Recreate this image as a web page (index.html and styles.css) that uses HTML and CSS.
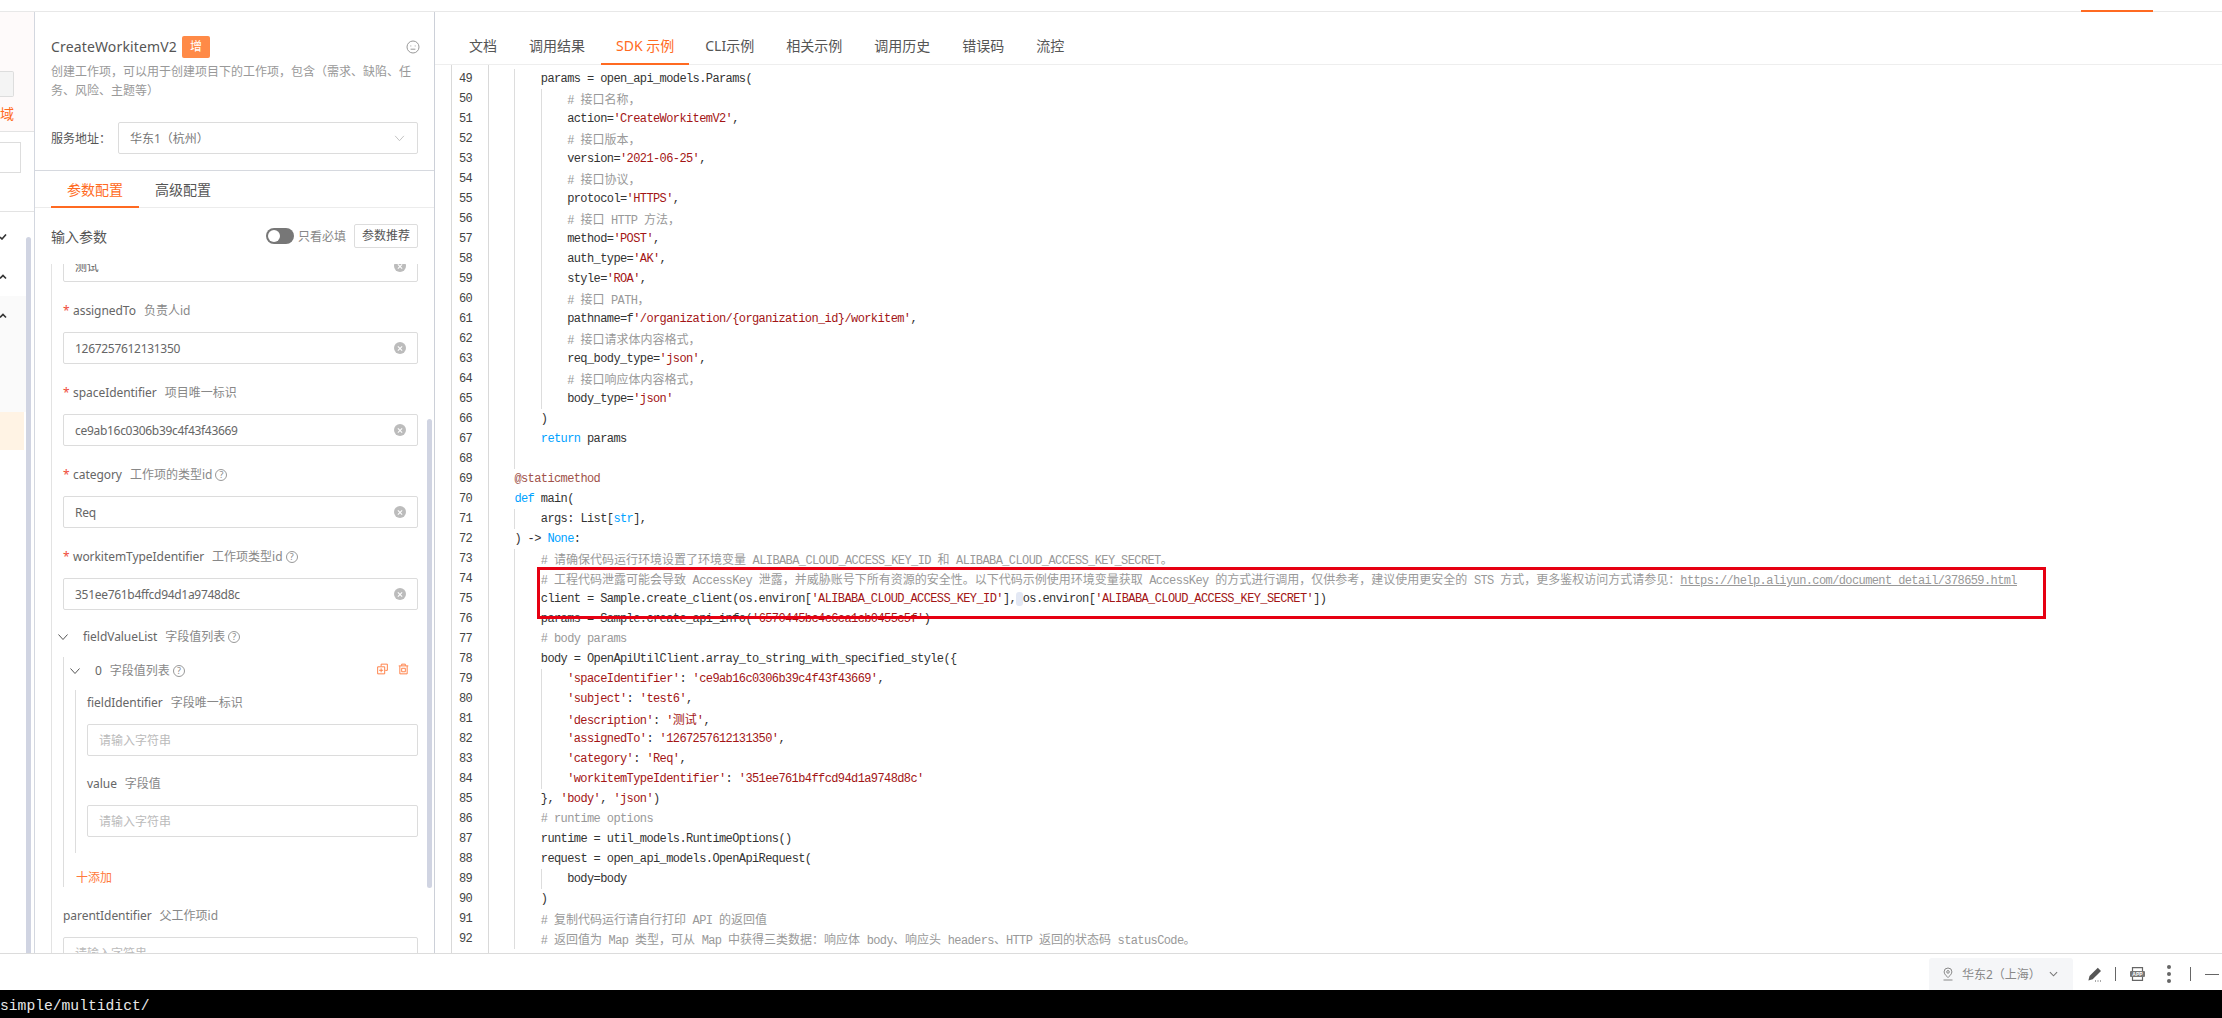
FILE: index.html
```html
<!DOCTYPE html>
<html lang="zh-CN">
<head>
<meta charset="utf-8">
<title>CreateWorkitemV2</title>
<link rel="stylesheet" href="styles.css">
</head>
<body>
<div class="page">
  <div class="topbar"><span class="top-mark"></span></div>
  <div class="main">
    <aside class="rail">
      <div class="rail-head"><div class="rail-btn"></div><div class="rail-link">域</div></div>
      <div class="rail-search"><div class="rail-input"></div></div>
      <div class="rail-row rail-first"><svg class="rail-chev" viewBox="0 0 8 6"><path d="M1 3 3 5 7 .5"/></svg></div>
      <div class="rail-row"><svg class="rail-chev" viewBox="0 0 8 6"><path d="M1 4.5 4 1.500 7 4.500"/></svg></div>
      <div class="rail-row rail-soft"><svg class="rail-chev" viewBox="0 0 8 6"><path d="M1 4.500 4 1.500 7 4.500"/></svg></div>
      <div class="rail-sel"></div>
      <span class="rail-bar"></span>
    </aside>

    <section class="panel">
      <header class="panel-head">
        <div class="title-row">
          <h1 class="title">CreateWorkitemV2</h1><span class="badge">增</span>
          <svg class="smile" viewBox="0 0 14 14"><circle cx="7" cy="7" r="6"/><path d="M4.800 5.500v.9M9.200 5.500v.9M4.600 9.200h4.800"/></svg>
        </div>
        <p class="desc">创建工作项&#xFF0C;可以用于创建项目下的工作项&#xFF0C;包含&#xFF08;需求、缺陷、任务、风险、主题等&#xFF09;</p>
        <div class="addr">
          <span class="addr-label">服务地址&#xFF1A;</span>
          <div class="select"><span>华东1&#xFF08;杭州&#xFF09;</span><svg class="sel-chev" viewBox="0 0 12 8"><path d="M1 1l5 5.500L11 1"/></svg></div>
        </div>
      </header>
      <nav class="ptabs"><span class="ptab on">参数配置</span><span class="ptab">高级配置</span></nav>
      <div class="inhead">
        <span class="in-title">输入参数</span>
        <span class="toggle"><span class="knob"></span></span>
        <span class="must">只看必填</span>
        <span class="rec">参数推荐</span>
      </div>
      <div class="form">
        <div class="input first"><span>测试</span><span class="clear"></span></div>
        <div class="lab"><b>*</b><span class="nm">assignedTo</span><span class="sub">负责人id</span></div>
        <div class="input"><span>1267257612131350</span><span class="clear"></span></div>
        <div class="lab"><b>*</b><span class="nm">spaceIdentifier</span><span class="sub">项目唯一标识</span></div>
        <div class="input"><span>ce9ab16c0306b39c4f43f43669</span><span class="clear"></span></div>
        <div class="lab"><b>*</b><span class="nm">category</span><span class="sub">工作项的类型id</span><span class="help">?</span></div>
        <div class="input"><span>Req</span><span class="clear"></span></div>
        <div class="lab"><b>*</b><span class="nm">workitemTypeIdentifier</span><span class="sub">工作项类型id</span><span class="help">?</span></div>
        <div class="input"><span>351ee761b4ffcd94d1a9748d8c</span><span class="clear"></span></div>

        <div class="lab tree-lab"><svg class="tree-chev" viewBox="0 0 10 6"><path d="M.5.5 5 5.500 9.500.5"/></svg><span class="nm">fieldValueList</span><span class="sub">字段值列表</span><span class="help">?</span></div>
        <div class="group">
          <div class="lab zero-lab">
            <svg class="tree-chev" viewBox="0 0 10 6"><path d="M.5.5 5 5.500 9.500.5"/></svg><span class="nm">0</span><span class="sub">字段值列表</span><span class="help">?</span>
            <span class="acts">
              <svg class="act" viewBox="0 0 12 12"><path d="M4.500 3V.7h6.800v6.800H9M.7 3.600h7.700v7.700H.7zM2.300 7.400h4.400M4.500 5.300v4.300"/></svg>
              <svg class="act" viewBox="0 0 12 12"><path d="M.8 2.600h10.400M4 2.400V.7h4v1.700M2 2.800v8.500h8V2.800M4 5.200h4v3.800H4z"/></svg>
            </span>
          </div>
          <div class="inner">
            <div class="lab inner-first"><span class="nm">fieldIdentifier</span><span class="sub">字段唯一标识</span></div>
            <div class="input ph"><span>请输入字符串</span></div>
            <div class="lab inner-next"><span class="nm">value</span><span class="sub">字段值</span></div>
            <div class="input ph"><span>请输入字符串</span></div>
          </div>
          <div class="add">十添加</div>
        </div>
        <div class="lab"><span class="nm">parentIdentifier</span><span class="sub">父工作项id</span></div>
        <div class="input ph"><span>请输入字符串</span></div>
      </div>
      <span class="form-bar"></span>
    </section>

    <section class="right">
      <nav class="rtabs">
        <span class="rtab">文档</span><span class="rtab">调用结果</span><span class="rtab on">SDK 示例</span><span class="rtab">CLI示例</span><span class="rtab">相关示例</span><span class="rtab">调用历史</span><span class="rtab">错误码</span><span class="rtab">流控</span>
      </nav>
      <div class="code">
<div class="ln"><span class="no">49</span><code class="src"><i class="b"></i><i class="g"></i>params = open_api_models.Params(</code></div>
<div class="ln"><span class="no">50</span><code class="src c"><i class="b"></i><i class="g"></i><i class="g"></i># <span class="z">接口名称&#xFF0C;</span></code></div>
<div class="ln"><span class="no">51</span><code class="src"><i class="b"></i><i class="g"></i><i class="g"></i>action=<span class="s">'CreateWorkitemV2'</span>,</code></div>
<div class="ln"><span class="no">52</span><code class="src c"><i class="b"></i><i class="g"></i><i class="g"></i># <span class="z">接口版本&#xFF0C;</span></code></div>
<div class="ln"><span class="no">53</span><code class="src"><i class="b"></i><i class="g"></i><i class="g"></i>version=<span class="s">'2021-06-25'</span>,</code></div>
<div class="ln"><span class="no">54</span><code class="src c"><i class="b"></i><i class="g"></i><i class="g"></i># <span class="z">接口协议&#xFF0C;</span></code></div>
<div class="ln"><span class="no">55</span><code class="src"><i class="b"></i><i class="g"></i><i class="g"></i>protocol=<span class="s">'HTTPS'</span>,</code></div>
<div class="ln"><span class="no">56</span><code class="src c"><i class="b"></i><i class="g"></i><i class="g"></i># <span class="z">接口</span> HTTP <span class="z">方法&#xFF0C;</span></code></div>
<div class="ln"><span class="no">57</span><code class="src"><i class="b"></i><i class="g"></i><i class="g"></i>method=<span class="s">'POST'</span>,</code></div>
<div class="ln"><span class="no">58</span><code class="src"><i class="b"></i><i class="g"></i><i class="g"></i>auth_type=<span class="s">'AK'</span>,</code></div>
<div class="ln"><span class="no">59</span><code class="src"><i class="b"></i><i class="g"></i><i class="g"></i>style=<span class="s">'ROA'</span>,</code></div>
<div class="ln"><span class="no">60</span><code class="src c"><i class="b"></i><i class="g"></i><i class="g"></i># <span class="z">接口</span> PATH<span class="z">&#xFF0C;</span></code></div>
<div class="ln"><span class="no">61</span><code class="src"><i class="b"></i><i class="g"></i><i class="g"></i>pathname=f<span class="s">'/organization/{organization_id}/workitem'</span>,</code></div>
<div class="ln"><span class="no">62</span><code class="src c"><i class="b"></i><i class="g"></i><i class="g"></i># <span class="z">接口请求体内容格式&#xFF0C;</span></code></div>
<div class="ln"><span class="no">63</span><code class="src"><i class="b"></i><i class="g"></i><i class="g"></i>req_body_type=<span class="s">'json'</span>,</code></div>
<div class="ln"><span class="no">64</span><code class="src c"><i class="b"></i><i class="g"></i><i class="g"></i># <span class="z">接口响应体内容格式&#xFF0C;</span></code></div>
<div class="ln"><span class="no">65</span><code class="src"><i class="b"></i><i class="g"></i><i class="g"></i>body_type=<span class="s">'json'</span></code></div>
<div class="ln"><span class="no">66</span><code class="src"><i class="b"></i><i class="g"></i>)</code></div>
<div class="ln"><span class="no">67</span><code class="src"><i class="b"></i><i class="g"></i><span class="k">return</span> params</code></div>
<div class="ln"><span class="no">68</span><code class="src"><i class="b"></i><i class="g"></i></code></div>
<div class="ln"><span class="no">69</span><code class="src"><i class="b"></i><span class="m">@staticmethod</span></code></div>
<div class="ln"><span class="no">70</span><code class="src"><i class="b"></i><span class="k">def</span> main(</code></div>
<div class="ln"><span class="no">71</span><code class="src"><i class="b"></i><i class="g"></i>args: List[<span class="k">str</span>],</code></div>
<div class="ln"><span class="no">72</span><code class="src"><i class="b"></i>) -&gt; <span class="k">None</span>:</code></div>
<div class="ln"><span class="no">73</span><code class="src c"><i class="b"></i><i class="g"></i># <span class="z">请确保代码运行环境设置了环境变量</span> ALIBABA_CLOUD_ACCESS_KEY_ID <span class="z">和</span> ALIBABA_CLOUD_ACCESS_KEY_SECRET<span class="z">。</span></code></div>
<div class="ln"><span class="no">74</span><code class="src c"><i class="b"></i><i class="g"></i># <span class="z">工程代码泄露可能会导致</span> AccessKey <span class="z">泄露&#xFF0C;并威胁账号下所有资源的安全性。以下代码示例使用环境变量获取</span> AccessKey <span class="z">的方式进行调用&#xFF0C;仅供参考&#xFF0C;建议使用更安全的</span> STS <span class="z">方式&#xFF0C;更多鉴权访问方式请参见&#xFF1A;</span><u>https://help.aliyun.com/document_detail/378659.html</u></code></div>
<div class="ln"><span class="no">75</span><code class="src"><i class="b"></i><i class="g"></i>client = Sample.create_client(os.environ[<span class="s">'ALIBABA_CLOUD_ACCESS_KEY_ID'</span>],<span class="cursor"> </span>os.environ[<span class="s">'ALIBABA_CLOUD_ACCESS_KEY_SECRET'</span>])</code></div>
<div class="ln"><span class="no">76</span><code class="src"><i class="b"></i><i class="g"></i>params = Sample.create_api_info(<span class="s">'6570445bc4c6ca1cb0455c5f'</span>)</code></div>
<div class="ln"><span class="no">77</span><code class="src c"><i class="b"></i><i class="g"></i># body params</code></div>
<div class="ln"><span class="no">78</span><code class="src"><i class="b"></i><i class="g"></i>body = OpenApiUtilClient.array_to_string_with_specified_style({</code></div>
<div class="ln"><span class="no">79</span><code class="src"><i class="b"></i><i class="g"></i><i class="g"></i><span class="s">'spaceIdentifier'</span>: <span class="s">'ce9ab16c0306b39c4f43f43669'</span>,</code></div>
<div class="ln"><span class="no">80</span><code class="src"><i class="b"></i><i class="g"></i><i class="g"></i><span class="s">'subject'</span>: <span class="s">'test6'</span>,</code></div>
<div class="ln"><span class="no">81</span><code class="src"><i class="b"></i><i class="g"></i><i class="g"></i><span class="s">'description'</span>: <span class="s">'<span class="z">测试</span>'</span>,</code></div>
<div class="ln"><span class="no">82</span><code class="src"><i class="b"></i><i class="g"></i><i class="g"></i><span class="s">'assignedTo'</span>: <span class="s">'1267257612131350'</span>,</code></div>
<div class="ln"><span class="no">83</span><code class="src"><i class="b"></i><i class="g"></i><i class="g"></i><span class="s">'category'</span>: <span class="s">'Req'</span>,</code></div>
<div class="ln"><span class="no">84</span><code class="src"><i class="b"></i><i class="g"></i><i class="g"></i><span class="s">'workitemTypeIdentifier'</span>: <span class="s">'351ee761b4ffcd94d1a9748d8c'</span></code></div>
<div class="ln"><span class="no">85</span><code class="src"><i class="b"></i><i class="g"></i>}, <span class="s">'body'</span>, <span class="s">'json'</span>)</code></div>
<div class="ln"><span class="no">86</span><code class="src c"><i class="b"></i><i class="g"></i># runtime options</code></div>
<div class="ln"><span class="no">87</span><code class="src"><i class="b"></i><i class="g"></i>runtime = util_models.RuntimeOptions()</code></div>
<div class="ln"><span class="no">88</span><code class="src"><i class="b"></i><i class="g"></i>request = open_api_models.OpenApiRequest(</code></div>
<div class="ln"><span class="no">89</span><code class="src"><i class="b"></i><i class="g"></i><i class="g"></i>body=body</code></div>
<div class="ln"><span class="no">90</span><code class="src"><i class="b"></i><i class="g"></i>)</code></div>
<div class="ln"><span class="no">91</span><code class="src c"><i class="b"></i><i class="g"></i># <span class="z">复制代码运行请自行打印</span> API <span class="z">的返回值</span></code></div>
<div class="ln"><span class="no">92</span><code class="src c"><i class="b"></i><i class="g"></i># <span class="z">返回值为</span> Map <span class="z">类型&#xFF0C;可从</span> Map <span class="z">中获得三类数据&#xFF1A;响应体</span> body<span class="z">、响应头</span> headers<span class="z">、</span>HTTP <span class="z">返回的状态码</span> statusCode<span class="z">。</span></code></div>
        <span class="redbox"></span>
      </div>
    </section>
  </div>

  <footer class="statusbar">
    <div class="region">
      <svg class="pin" viewBox="0 0 12 14"><path d="M6 1a3.900 3.900 0 0 0-3.900 3.900C2.100 7.500 6 10.500 6 10.500s3.900-3 3.900-5.600A3.900 3.900 0 0 0 6 1z"/><circle cx="6" cy="4.900" r="1.300"/><path d="M1.500 13h9"/></svg>
      <span class="region-name">华东2&#xFF08;上海&#xFF09;</span>
      <svg class="region-chev" viewBox="0 0 10 6"><path d="M1 1l4 4 4-4"/></svg>
    </div>
    <svg class="pen" viewBox="0 0 15 15"><path d="M10.800.8l3.200 3.200-8.300 8.300-4.300 1.100 1.100-4.300z"/><path class="pen-dots" d="M8 14h1M10.500 14h1M13 14h1"/></svg>
    <span class="sep"></span>
    <svg class="appicon" viewBox="0 0 15 14"><path class="app-frame" d="M2.500 4V.6h10V4M2.500 10v3.400h10V10"/><rect class="app-band" x="0" y="4" width="15" height="6" rx="1"/><text class="app-text" x="7.500" y="9">APP</text></svg>
    <span class="dots"><i></i><i></i><i></i></span>
    <span class="sep sep2"></span>
    <span class="dash"></span>
  </footer>
  <div class="terminal">simple/multidict/</div>
</div>
</body>
</html>
```
FILE: styles.css
```css
* { box-sizing: border-box; }
html, body { margin: 0; padding: 0; background: #fff; }
body { font-family: "Noto Sans", "Noto Sans CJK SC", sans-serif; color: #555; font-size: 12px; }
.page { width: 2222px; height: 1018px; overflow: hidden; display: flex; flex-direction: column; }

.topbar { height: 12px; flex: none; border-bottom: 1px solid #e8e8e8; position: relative; }
.top-mark { position: absolute; left: 2081px; top: 10px; width: 72px; height: 2px; background: #ff6a21; }

.main { height: 941px; flex: none; display: flex; overflow: hidden; }

/* left rail */
.rail { width: 35px; flex: none; border-right: 1px solid #d3d7df; position: relative; overflow: hidden; }
.rail-head { height: 120px; background: #fefafa; border-bottom: 1px solid #e3e3e3; padding-top: 59px; }
.rail-btn { width: 14px; height: 26px; background: #f4f4f4; border: 1px solid #ddd; border-left: 0; border-radius: 0 2px 2px 0; }
.rail-link { margin-top: 8px; font-size: 14px; line-height: 18px; color: #ff6a21; }
.rail-search { height: 80px; padding-top: 10px; border-bottom: 1px solid #e3e3e3; }
.rail-input { width: 21px; height: 31px; border: 1px solid #ddd; border-left: 0; }
.rail-row { height: 39px; padding-top: 17px; display: flex; align-items: flex-start; }
.rail-first { padding-top: 22px; height: 45px; }
.rail-soft { background: #fafafa; width: 26px; height: 116px; padding-top: 17px; }
.rail-chev { width: 8px; height: 6px; margin-left: -1px; fill: none; stroke: #333; stroke-width: 1.600; }
.rail-sel { width: 24px; height: 38px; background: #fff3e4; }
.rail-bar { position: absolute; left: 26px; top: 225px; width: 5px; height: 730px; border-radius: 3px; background: #d0d4e2; }

/* parameters panel */
.panel { width: 400px; flex: none; border-right: 1px solid #ccd0d8; position: relative; display: flex; flex-direction: column; overflow: hidden; }
.panel-head { height: 159px; flex: none; padding: 24px 16px 0; border-bottom: 1px solid #d6d9df; }
.title-row { display: flex; align-items: center; height: 22px; }
.title { margin: 0; font-size: 14px; font-weight: 400; color: #555; line-height: 22px; letter-spacing: .15px; }
.badge { width: 28px; height: 22px; margin-left: 5px; background: #ff8a47; color: #fff; border-radius: 2px; text-align: center; line-height: 22px; font-size: 12px; }
.smile { width: 14px; height: 14px; margin-left: auto; margin-right: -2px; fill: none; stroke: #999; stroke-width: 1; }
.desc { margin: 4px 0 0; color: #999; font-size: 12px; line-height: 19px; width: 368px; height: 38px; }
.addr { display: flex; align-items: center; margin-top: 22px; }
.addr-label { width: 67px; flex: none; color: #555; font-size: 12px; }
.select { flex: 1; height: 32px; border: 1px solid #dcdcdc; border-radius: 2px; display: flex; align-items: center; justify-content: space-between; padding: 0 12px 0 11px; color: #777; }
.sel-chev { width: 11px; height: 7px; fill: none; stroke: #bbb; stroke-width: 1; }

.ptabs { height: 37px; flex: none; display: flex; border-bottom: 1px solid #ececec; padding-left: 16px; }
.ptab { height: 37px; padding: 0 16px; line-height: 37px; font-size: 14px; color: #555; width: 88px; text-align: center; }
.ptab.on { color: #ff6a21; border-bottom: 2px solid #ff6a21; }

.inhead { height: 56px; flex: none; display: flex; align-items: center; padding: 0 16px; }
.in-title { font-size: 14px; color: #555; margin-right: auto; }
.toggle { width: 28px; height: 16px; background: #777; border-radius: 8px; padding: 2px; display: flex; }
.knob { width: 12px; height: 12px; background: #fff; border-radius: 50%; }
.must { margin-left: 4px; color: #888; }
.rec { margin-left: 8px; width: 64px; height: 24px; border: 1px solid #ddd; border-radius: 2px; text-align: center; line-height: 22px; color: #555; }

.form { flex: 1; margin-left: 16px; padding: 0 16px 0 11px; border-left: 1px solid #e3e3e3; overflow: hidden; }
.input { height: 32px; border: 1px solid #dcdcdc; border-radius: 2px; padding: 0 11px; display: flex; align-items: center; justify-content: space-between; color: #666; font-size: 12px; letter-spacing: -.3px; }
.input.first { margin-top: -14px; }
.input.ph { color: #bbb; letter-spacing: 0; }
.clear { width: 12px; height: 12px; border-radius: 50%; background: #bcbcbc; flex: none; position: relative; }
.clear::before, .clear::after { content: ""; position: absolute; left: 3px; top: 5.500px; width: 6px; height: 1px; background: #fff; transform: rotate(45deg); }
.clear::after { transform: rotate(-45deg); }
.lab { height: 18px; margin: 20px 0 12px; display: flex; align-items: center; line-height: 18px; }
.lab b { width: 10px; font-weight: 400; color: #f04b3a; }
.nm { color: #666; letter-spacing: -.05px; }
.sub { color: #888; margin-left: 8px; }
.help { width: 12px; height: 12px; margin-left: 3px; border: 1px solid #999; border-radius: 50%; font-size: 9px; line-height: 10px; text-align: center; color: #888; }

.tree-lab { margin: 18px 0 0 -5px; }
.tree-chev { width: 10px; height: 6px; margin-right: 15px; fill: none; stroke: #555; stroke-width: 1; flex: none; }
.group { margin-top: 11px; border-left: 1px solid #ddd; padding: 0 0 0 6px; }
.zero-lab { margin: 0; height: 26px; padding-top: 2px; }
.acts { margin-left: auto; display: flex; gap: 10px; margin-right: 9px; margin-top: -4px; }
.act { width: 11px; height: 12px; fill: none; stroke: #ff7a3d; stroke-width: 1; }
.inner { margin: 7px 0 0 5px; padding: 4px 0 16px 11px; border-left: 1px solid #ddd; }
.inner-first { margin-top: 0; }
.inner-next { margin-top: 19px; }
.add { margin: 16px 0 0 6px; height: 18px; line-height: 18px; color: #ff7a3d; font-size: 12px; }
.form-bar { position: absolute; left: 392px; top: 407px; width: 5px; height: 469px; border-radius: 3px; background: #d0d4e2; }

/* right side */
.right { flex: 1; min-width: 0; display: flex; flex-direction: column; }
.rtabs { height: 53px; flex: none; display: flex; padding: 14px 0 0 18px; border-bottom: 1px solid #eee; }
.rtab { height: 39px; padding: 0 16px; line-height: 40px; font-size: 14px; color: #555; }
.rtab.on { color: #ff6a21; border-bottom: 2px solid #ff6a21; padding: 0 15px; }

.code { flex: 1; margin-left: 16px; border-left: 1px solid #d9d9d9; padding-top: 4px; position: relative; overflow: hidden; }
.code::before { content: ""; position: absolute; left: 36px; top: 0; bottom: 0; border-left: 1px solid #d9d9d9; }
.ln { display: flex; height: 20px; }
.no { width: 36px; flex: none; padding-left: 7px; font: 12px/20px "Liberation Mono", monospace; letter-spacing: -.6px; color: #444; }
.src { font: 12px/20px "Liberation Mono", "Noto Sans CJK SC", monospace; letter-spacing: -.6px; white-space: pre; color: #333; display: block; }
.b, .g { display: inline-block; width: 26.400px; height: 20px; vertical-align: top; }
.g { border-left: 1px solid #ddd; }
.c { color: #999; }
.z { font-family: "Noto Sans CJK SC", sans-serif; font-size: 12px; letter-spacing: 0; }
.s { color: #a31515; }
.k { color: #00a2ff; }
.m { color: #a0524a; }
u { text-decoration: underline; }
.cursor { background: #e3e8f4; border-radius: 3px; }
.redbox { position: absolute; left: 85px; top: 502px; width: 1509px; height: 52px; border: 3px solid #e60012; }

/* status bar */
.statusbar { height: 37px; flex: none; border-top: 1px solid #dcdcdc; padding: 4px 0 0 1929px; display: flex; align-items: center; }
.region { width: 144px; height: 32px; background: #f5f6f8; border-radius: 3px 3px 0 0; display: flex; align-items: center; padding: 0 15px 0 13px; flex: none; color: #888; }
.pin { width: 12px; height: 14px; fill: none; stroke: #888; stroke-width: 1; flex: none; }
.region-name { margin-left: 8px; font-size: 12px; white-space: nowrap; }
.region-chev { width: 9px; height: 6px; margin-left: auto; fill: none; stroke: #777; stroke-width: 1.200; flex: none; }
.pen { width: 15px; height: 15px; margin-left: 14px; flex: none; fill: #555; }
.pen-dots { stroke: #555; fill: none; }
.sep { width: 1px; height: 14px; background: #666; margin-left: 13px; flex: none; }
.appicon { width: 15px; height: 14px; margin-left: 14px; flex: none; }
.app-frame { fill: none; stroke: #666; stroke-width: 1.200; }
.app-band { fill: #777; }
.app-text { fill: #fff; font: 700 5px "Liberation Sans", sans-serif; text-anchor: middle; }
.dots { display: flex; flex-direction: column; gap: 3px; margin-left: 22px; flex: none; }
.dots i { width: 4px; height: 4px; background: #666; border-radius: 50%; display: block; }
.sep2 { margin-left: 19px; }
.dash { width: 14px; height: 1px; background: #666; margin-left: 14px; flex: none; }

.terminal { height: 28px; flex: none; background: #000; color: #e8e8e8; font: 14.670px/33px "Liberation Mono", monospace; white-space: pre; }
```
